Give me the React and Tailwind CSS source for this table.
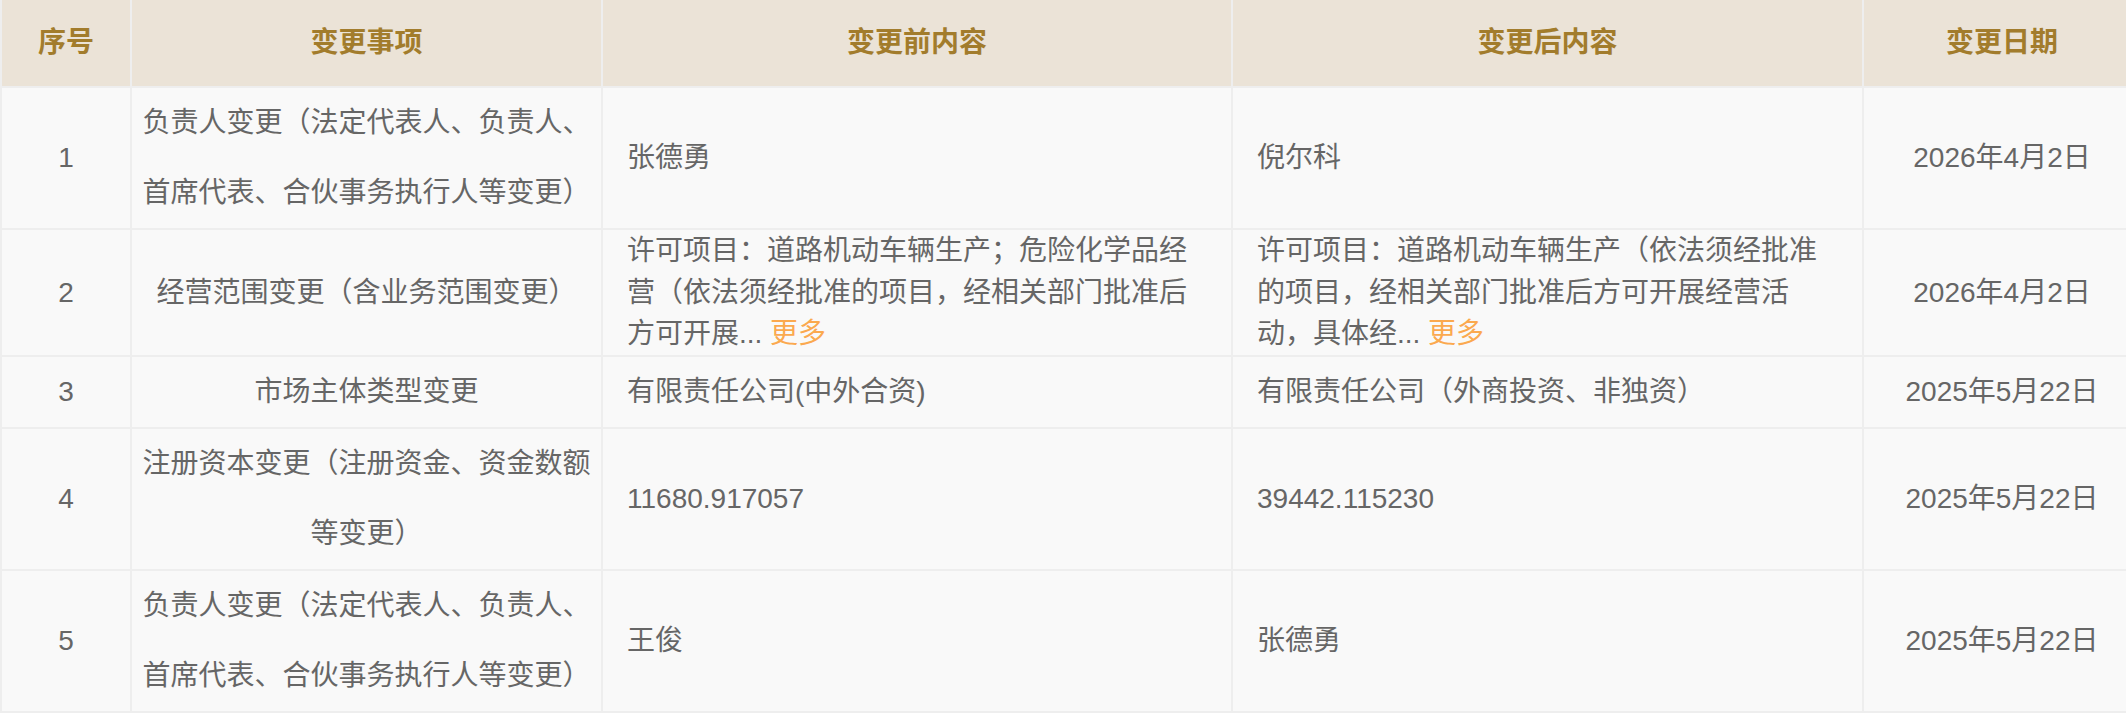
const records = [
  {
    id: 1,
    item: '负责人变更（法定代表人、负责人、首席代表、合伙事务执行人等变更）',
    before: '张德勇',
    after: '倪尔科',
    date: '2026年4月2日',
  },
  {
    id: 2,
    item: '经营范围变更（含业务范围变更）',
    before: '许可项目：道路机动车辆生产；危险化学品经营（依法须经批准的项目，经相关部门批准后方可开展...',
    beforeMore: true,
    after: '许可项目：道路机动车辆生产（依法须经批准的项目，经相关部门批准后方可开展经营活动，具体经...',
    afterMore: true,
    date: '2026年4月2日',
  },
  {
    id: 3,
    item: '市场主体类型变更',
    before: '有限责任公司(中外合资)',
    after: '有限责任公司（外商投资、非独资）',
    date: '2025年5月22日',
  },
  {
    id: 4,
    item: '注册资本变更（注册资金、资金数额等变更）',
    before: '11680.917057',
    after: '39442.115230',
    date: '2025年5月22日',
  },
  {
    id: 5,
    item: '负责人变更（法定代表人、负责人、首席代表、合伙事务执行人等变更）',
    before: '王俊',
    after: '张德勇',
    date: '2025年5月22日',
  },
]

function Content({ text, more }) {
  return (
    <td className="bg-[#f9f9f9] px-6 align-middle text-left leading-[41.7px]">
      {text}
      {more && <span className="text-[#fba94f]"> 更多</span>}
    </td>
  )
}

export default function App() {
  return (
    <div className="min-h-screen bg-white font-['Liberation_Sans','Noto_Sans_CJK_SC',sans-serif] text-[28px] text-[#666666]">
      <div className="w-full overflow-hidden">
        {/* Change records table */}
        <table className="-mt-[2px] w-[2142px] table-fixed border-separate border-spacing-[2px] bg-[#eeeeee]">
          <colgroup>
            <col className="w-[128px]" />
            <col className="w-[469px]" />
            <col className="w-[628px]" />
            <col className="w-[629px]" />
            <col className="w-[276px]" />
          </colgroup>
          <thead>
            <tr className="h-[86px] bg-[#ebe3d7] font-bold text-[#a27c2c]">
              <th className="text-center">序号</th>
              <th className="text-center">变更事项</th>
              <th className="text-center">变更前内容</th>
              <th className="text-center">变更后内容</th>
              <th className="text-center">变更日期</th>
            </tr>
          </thead>
          <tbody>
            {records.map((r) => (
              <tr key={r.id}>
                <td className="bg-[#f9f9f9] text-center align-middle">{r.id}</td>
                <td className="bg-[#f9f9f9] px-[10px] text-center align-middle leading-[70px]">
                  {r.item}
                </td>
                <Content text={r.before} more={r.beforeMore} />
                <Content text={r.after} more={r.afterMore} />
                <td className="bg-[#f9f9f9] text-center align-middle">{r.date}</td>
              </tr>
            ))}
          </tbody>
        </table>
      </div>
    </div>
  )
}
